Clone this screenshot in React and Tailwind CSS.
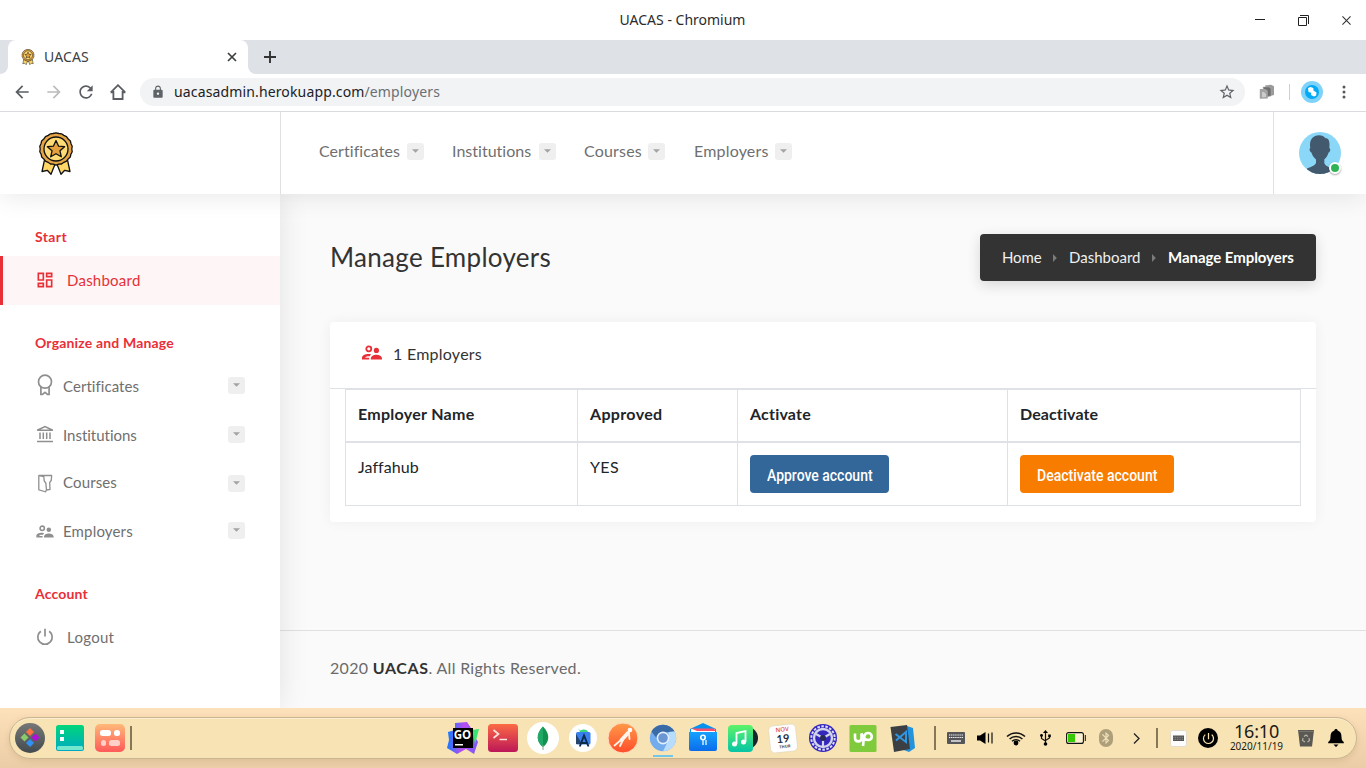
import React from "react";
import { MdOutlineDashboard, MdLock, MdStarBorder, MdRefresh, MdArrowBack, MdArrowForward, MdPowerSettingsNew, MdBluetooth } from "react-icons/md";

const NOTO = "font-['Noto_Sans',sans-serif]";

function Medal({ className }) {
  return (
    <svg viewBox="0 0 34 43" className={className}>
      <g stroke="#111" strokeWidth="1.3" strokeLinejoin="round">
        <path d="M5.500 28 3 39.500 8.300 38.300 12 42.200 16.500 31zM28.500 28 31 39.500 25.700 38.300 22 42.200 17.500 31z" fill="#ffd766" />
        <path d="M17 .8 20 1.500 22.500 1.800 24.800 3.400 27.500 4.700 29.200 7 31.400 9 32 11.700 33.200 14.300 32.800 17 33.200 19.700 31.900 22.200 31.300 25 29.200 26.900 27.500 29.200 24.900 30.300 22.500 32 19.800 32.200 17 33.200 14.200 32.200 11.500 32 9.100 30.300 6.500 29.200 4.800 26.900 2.700 25 2.100 22.200.8 19.700 1.200 17 .8 14.300 2 11.700 2.600 9 4.800 7 6.500 4.700 9.200 3.400 11.500 1.800 14 1.500z" fill="#e5a544" />
        <circle cx="17" cy="17" r="12" fill="#ffdb75" />
        <path d="m17 8.500 2.500 5.600 6.100.6-4.600 4.100 1.300 6-5.300-3.100-5.300 3.100 1.300-6-4.600-4.100 6.100-.6z" fill="#e5a03e" />
      </g>
    </svg>
  );
}

function Chip() {
  return (
    <span className="flex h-[17px] w-[17px] shrink-0 items-center justify-center rounded-[3px] bg-[#efefef]">
      <svg viewBox="0 0 7 4" className="-mt-px h-[4px] w-[7px]"><path d="M0 .3h7L3.500 3.800z" fill="#a3a3a3" /></svg>
    </span>
  );
}

function People({ className }) {
  return (
    <svg viewBox="0 0 20 15" className={className} fill="currentColor">
      <circle cx="6.800" cy="3.800" r="2.500" fill="none" stroke="currentColor" strokeWidth="1.800" />
      <circle cx="14.400" cy="5.400" r="2.600" />
      <path d="M8.800 14.500v-.8c0-2.600 3-3.900 5.500-3.900s5.700 1.300 5.700 3.900v.8z" />
      <path d="M0 14.500v-1.700c0-2.600 3.800-4 7.500-3.700.6 0 1.100.2 1.500.3L7.400 11.400c-2.300-.2-3.700.5-4.200 1.300h4v1.800z" />
    </svg>
  );
}
function AwardIcon() {
  return (
    <svg viewBox="0 0 16 22" className="-mt-[3px] h-[22px] w-[16px]" fill="none" stroke="#8f8f8f" strokeWidth="1.700">
      <circle cx="8" cy="7.700" r="6.500" />
      <path d="M3.900 12.500V20.300H5.500L8 18.300l2.500 2H12.100V12.500" />
    </svg>
  );
}
function BankIcon() {
  return (
    <svg viewBox="0 0 18 18" className="-mt-[3px] h-[18px] w-[18px]" fill="none" stroke="#8f8f8f" strokeWidth="1.500">
      <path d="M1.200 5.300 9 1.600l7.800 3.700zM4 7.500V14M7.300 7.500V14M10.700 7.500V14M14 7.500V14M1 16.500h16" />
    </svg>
  );
}
function CourseIcon() {
  return (
    <svg viewBox="0 0 16 19" className="h-[19px] w-[16px]" fill="none" stroke="#8f8f8f" strokeWidth="1.300">
      <path d="M1.500 1.500h13.500M1.800 1.500V15.800L8.500 17.800 9.500 16 8.800 9 7.200 7 6.800 2.500 1.800 1.500M14.700 1.500 14.200 6.500 12.700 8.500 13 15.500 9.500 16" />
    </svg>
  );
}
function PowerIcon() {
  return (
    <svg viewBox="0 0 18 18" className="-mt-[2px] h-[18px] w-[18px]" fill="none" stroke="#8f8f8f" strokeWidth="1.700">
      <path d="M4.800 3.200a7.200 7.200 0 1 0 8.400 0M9 .8V8.500" />
    </svg>
  );
}

function SideItem({ icon, label, h, gap = "gap-[9px]", chip = true, track, chipPos = "" }) {
  return (
    <div className={"flex items-center pl-[36px] pr-[35px] text-[15px] text-[#6f6f6f] " + h + " " + gap}>
      <span className="flex w-[18px] shrink-0 justify-center">{icon}</span>
      <span className={"flex-1 whitespace-nowrap " + track}>{label}</span>
      {chip && <span className={chipPos}><Chip /></span>}
    </div>
  );
}

function Sidebar() {
  return (
    <aside className="flex w-[280px] shrink-0 flex-col bg-white shadow-[0_0_28px_rgba(0,0,0,0.1)]">
      <div className="h-[62px] pl-[35px] pt-[33px] text-[14px] leading-[20px] font-bold tracking-[0.38px] text-[#e92f37]">Start</div>
      <div className="flex h-[49px] items-center gap-[13px] border-l-[3px] border-[#e92f37] bg-[#fef6f6] pl-[32px] text-[15px] tracking-[0.23px] text-[#e92f37]">
        <MdOutlineDashboard className="h-[20px] w-[20px] -mt-[2px] -mr-[1px]" />
        Dashboard
      </div>
      <div className="h-[57px] pl-[35px] pt-[28px] text-[14px] leading-[20px] font-bold tracking-[0.17px] whitespace-nowrap text-[#e92f37]">Organize and Manage</div>
      <SideItem icon={<AwardIcon />} label="Certificates" h="h-[49px]" track="tracking-[0.05px]" chipPos="-mt-[2px]" />
      <SideItem icon={<BankIcon />} label="Institutions" h="h-[49px]" track="tracking-[-0.02px]" chipPos="-mt-[2px]" />
      <SideItem icon={<CourseIcon />} label="Courses" h="h-[47px]" track="-mt-[2px] tracking-[0.13px]" />
      <SideItem icon={<People className="h-[13px] w-[18px] shrink-0 text-[#8f8f8f]" />} label="Employers" h="h-[48px]" track="tracking-[0.16px]" chipPos="-mt-[2px]" />
      <div className="h-[58px] pl-[35px] pt-[29px] text-[14px] leading-[20px] font-bold tracking-[0.18px] text-[#e92f37]">Account</div>
      <SideItem icon={<PowerIcon />} label="Logout" h="h-[49px]" gap="gap-[13px]" track="tracking-[0.28px]" chip={false} />
    </aside>
  );
}

function NavItem({ label, className, track }) {
  return (
    <div className={"flex items-center gap-[7px] text-[16px] text-[#6f6f6f] " + className}>
      <span className={"-mt-[2px] whitespace-nowrap " + track}>{label}</span>
      <Chip />
    </div>
  );
}

function Avatar() {
  return (
    <div className="relative h-[42px] w-[42px]">
      <svg viewBox="0 0 42 42" className="h-[42px] w-[42px]">
        <defs><clipPath id="av"><circle cx="21" cy="21" r="21" /></clipPath></defs>
        <g clipPath="url(#av)">
          <rect width="42" height="42" fill="#8ad7f7" />
          <path d="M11.300 16C10 9 13 3.500 20 3.300c3 0 5 1 6.500 3C30 6 31 10 30.300 16c1.400.2 1.200 4-.7 4.500-.8 3-2.300 5-4.300 7v3.500c1 3 4.500 4 7.700 5.500l2 6H6l2-6c3.200-1.500 7.500-2.500 9-5.500v-3.500c-2-2-3.800-4-4.600-7-2-.5-2.300-4.300-1.100-4.500z" fill="#43596e" />
        </g>
      </svg>
      <span className="absolute left-[30px] top-[30px] h-[12px] w-[12px] rounded-full border-2 border-white bg-[#2fb355] shadow-[0_1px_2px_rgba(0,0,0,0.35)]" />
    </div>
  );
}

function Browser() {
  return (
    <>
      <div className={"flex h-[40px] shrink-0 items-center bg-white pl-[109px] pr-[15px] " + NOTO}>
        <div className="-mt-[2px] flex-1 pl-[1px] text-center text-[14px] text-[#2b2b2b]">UACAS - Chromium</div>
        <div className="flex w-[96px] items-center justify-between">
          <svg viewBox="0 0 10 10" className="h-[10px] w-[10px]"><path d="M0 4h10v1H0z" fill="#222" /></svg>
          <svg viewBox="0 0 11 11" className="-ml-px h-[11px] w-[11px]" fill="none" stroke="#222"><path d="M.5 2.500h8v8h-8zM2 .5h8.500V9" /></svg>
          <svg viewBox="0 0 10 10" className="h-[9px] w-[9px]" fill="none" stroke="#333" strokeWidth="1.200"><path d="M.5.5l9 9M9.500.5l-9 9" /></svg>
        </div>
      </div>
      <div className="flex h-[34px] shrink-0 bg-[#dee1e6]">
        <div className="w-[8px] bg-white"><div className="h-full w-full rounded-br-[8px] bg-[#dee1e6]" /></div>
        <div className={"flex w-[240px] items-center rounded-t-[8px] bg-white pl-[13px] pr-[11px] text-[14px] text-[#3c4043] " + NOTO}>
          <Medal className="h-[16px] w-[14px]" />
          <span className="-mt-[2px] ml-[9px] flex-1 tracking-[0.1px]">UACAS</span>
          <svg viewBox="0 0 10 10" className="h-[10px] w-[10px]" fill="none" stroke="#3c4043" strokeWidth="1.700"><path d="M1 1l8 8M9 1 1 9" /></svg>
        </div>
        <div className="w-[8px] bg-white"><div className="h-full w-full rounded-bl-[8px] bg-[#dee1e6]" /></div>
        <div className="flex items-center pl-[8px]">
          <svg viewBox="0 0 12 12" className="h-[12px] w-[12px]" fill="none" stroke="#333" strokeWidth="1.900"><path d="M6 0v12M0 6h12" /></svg>
        </div>
      </div>
      <div className={"flex h-[38px] shrink-0 items-center border-b border-[#d9dbde] bg-white pb-px pl-[12px] " + NOTO}>
        <div className="flex w-[128px] items-center gap-[12px]">
          <MdArrowBack className="h-[20px] w-[20px] text-[#5a5d61]" />
          <MdArrowForward className="h-[20px] w-[20px] text-[#babcbe]" />
          <MdRefresh className="h-[20px] w-[20px] text-[#5a5d61]" />
          <svg viewBox="0 0 16 16" className="ml-[2px] h-[16px] w-[16px]" fill="none" stroke="#5a5d61" strokeWidth="1.800"><path d="M.8 8.300 8 1.200l7.200 7.100M3.400 7v8h9.200V7M.6 8.400h3M12.400 8.400h3" /></svg>
        </div>
        <div className="flex h-[28px] w-[1105px] items-center rounded-full bg-[#f1f3f4] pl-[11px] pr-[9px] text-[14px] text-[#202124]">
          <MdLock className="h-[14px] w-[14px] text-[#5f6368]" />
          <span className="-mt-px ml-[9px] flex-1 tracking-[0.14px]">uacasadmin.herokuapp.com<span className="text-[#6b6f74]">/employers</span></span>
          <MdStarBorder className="h-[18px] w-[18px] text-[#5f6368]" />
        </div>
        <svg viewBox="0 0 16 16" className="ml-[14px] h-[16px] w-[16px]">
          <path d="M6 1.500 12 .8l3 1.500V11L9 12.500z" fill="#9a9a9a" /><path d="M4 3h6l2 1.500V12l-6 1z" fill="#6f6f6f" stroke="#aaa" strokeWidth=".5" />
          <path d="M.8 5h5.500l2.500 1.800V14.500l-8 .3z" fill="#a3a3a3" /><path d="M3 8h2l2 2v3l-4 .3z" fill="#ccc" />
        </svg>
        <span className="ml-[14px] h-[16px] w-px bg-[#cdcfd2]" />
        <svg viewBox="0 0 22 22" className="ml-[11px] h-[22px] w-[22px]">
          <circle cx="11" cy="11" r="11" fill="#7fd3fb" /><circle cx="11" cy="11" r="7" fill="#03a9f4" />
          <path d="M7 7 9.500 6l2.800 1 .2 2.500 3 2-.3 3-2.200 1-3-1.500.3-2.200L7.500 11z" fill="#fff" />
        </svg>
        <svg viewBox="0 0 4 14" className="ml-[19px] h-[14px] w-[4px]" fill="#55585c"><circle cx="2" cy="2" r="1.500" /><circle cx="2" cy="7" r="1.500" /><circle cx="2" cy="12" r="1.500" /></svg>
      </div>
    </>
  );
}

function BreadArrow() {
  return <svg viewBox="0 0 4 8" className="mt-px h-[8px] w-[4px]"><path d="M0 0l3.800 4L0 8z" fill="#7b7b7b" /></svg>;
}

function Main() {
  return (
    <main className="flex flex-1 flex-col bg-[#fafafa]">
      <div className="flex h-[128px] items-start justify-between pl-[50px] pr-[50px] pt-[40px]">
        <h1 className="pt-[7px] text-[26px] leading-[32px] tracking-[0.3px] text-[#333]">Manage Employers</h1>
        <div className="flex h-[47px] w-[336px] items-center rounded-[4px] bg-[#333] pb-px pl-[22px] text-[15px] whitespace-nowrap text-[#f0f0f0] shadow-[0_4px_14px_rgba(0,0,0,0.14)]">
          <span className="w-[51px] tracking-[-0.1px]">Home</span><BreadArrow />
          <span className="ml-[12px] w-[83px]">Dashboard</span><BreadArrow />
          <span className="ml-[12px] font-bold tracking-[-0.05px] text-white">Manage Employers</span>
        </div>
      </div>
      <section className="mx-[50px] h-[200px] rounded-[4px] bg-white text-[16px] text-[#212529] shadow-[0_0_14px_rgba(0,0,0,0.05)]">
        <div className="flex h-[67px] items-center border-b border-[#dee2e6] pl-[32px]">
          <People className="-mt-[5px] h-[15px] w-[20px] text-[#e92f37]" />
          <span className="-mt-[2px] ml-[11px] tracking-[0.25px] text-[#333]">1 Employers</span>
        </div>
        <div className="mx-[15px] border-l border-t border-[#dee2e6]">
          <div className="grid h-[53px] grid-cols-[232px_160px_270px_293px] border-b-2 border-[#dee2e6] font-bold">
            {[["Employer Name", "tracking-[0.28px]"], ["Approved", "tracking-[0.34px]"], ["Activate", "tracking-[0.2px]"], ["Deactivate", "tracking-[0.1px]"]].map(([t, c]) => (
              <div key={t} className={"flex items-center border-r border-[#dee2e6] pb-[3px] pl-[12px] " + c}>{t}</div>
            ))}
          </div>
          <div className="grid h-[63px] grid-cols-[232px_160px_270px_293px] border-b border-[#dee2e6]">
            <div className="border-r border-[#dee2e6] pl-[12px] pt-[12px] tracking-[0.06px]">Jaffahub</div>
            <div className="border-r border-[#dee2e6] pl-[12px] pt-[12px] tracking-[0.36px]">YES</div>
            <div className="border-r border-[#dee2e6] pl-[12px] pt-[12px]">
              <button className="flex h-[38px] w-[139px] items-center rounded-[4px] bg-[#336699] pt-[3px] pl-[17px] text-white"><span className="origin-left scale-x-[0.874] font-['Roboto',sans-serif] font-medium whitespace-nowrap">Approve account</span></button>
            </div>
            <div className="border-r border-[#dee2e6] pl-[12px] pt-[12px]">
              <button className="flex h-[38px] w-[154px] items-center rounded-[4px] bg-[#f77c00] pt-[3px] pl-[17px] text-white"><span className="origin-left scale-x-[0.877] font-['Roboto',sans-serif] font-medium whitespace-nowrap">Deactivate account</span></button>
            </div>
          </div>
        </div>
      </section>
      <footer className="mt-[108px] flex flex-1 items-center whitespace-pre border-t border-[#dee0e2] pl-[50px] text-[16px] tracking-[0.3px] text-[#6a6a6a]">
        <span className="-mt-[3px]">2020 <b className="tracking-[0.6px] text-[#333]">UACAS</b>. All Rights Reserved.</span>
      </footer>
    </main>
  );
}

function Icon({ children, s = "h-[32px] w-[32px]", slot = "w-[40px]", vb = "0 0 32 32" }) {
  return <span className={"flex shrink-0 items-center justify-center " + slot}><svg viewBox={vb} className={s}>{children}</svg></span>;
}
const Sep = ({ className = "h-[24px]" }) => <span className={"w-[2px] shrink-0 bg-[#857859] " + className} />;

function Taskbar() {
  return (
    <footer className="flex h-[60px] shrink-0 items-start bg-linear-to-b from-[#fde1ba] to-[#ebcda7] px-[9px] pt-[9px]">
      <div className={"flex h-[42px] w-full items-center rounded-[21px] border border-[#cbb694] bg-[#f7e3b4] shadow-[0_2px_6px_rgba(120,80,30,0.15),inset_0_1px_0_#fbedcd] " + NOTO}>
        <Icon>
          <defs><linearGradient id="g1" x2="0" y2="1"><stop stopColor="#777" /><stop offset="1" stopColor="#434b4e" /></linearGradient></defs>
          <circle cx="16" cy="16" r="15" fill="url(#g1)" />
          <path d="m16 6 4 4-4 4-4-4z" fill="#ff7043" /><path d="m10.500 11.500 4 4-4 4-4-4z" fill="#8bc96a" /><path d="m21.500 11.500 4 4-4 4-4-4z" fill="#b010d8" /><path d="m16 17 4 4-4 4-4-4z" fill="#3191f5" />
        </Icon>
        <Icon>
          <defs><linearGradient id="g2" x2="0" y2="1"><stop stopColor="#00d67a" /><stop offset="1" stopColor="#00a9c4" /></linearGradient></defs>
          <rect x="2" y="3" width="28" height="26" rx="2.500" fill="url(#g2)" /><rect x="3" y="24" width="26" height="4" rx="1.500" fill="#74e8cf" />
          <path d="M6 8h4v4H6zM6 15h4v4H6z" fill="#fff" />
        </Icon>
        <Icon>
          <defs><linearGradient id="g3" x2="0" y2="1"><stop stopColor="#ffb978" /><stop offset="1" stopColor="#ff5a5a" /></linearGradient></defs>
          <rect x="1" y="2" width="30" height="28" rx="5" fill="url(#g3)" />
          <rect x="6" y="8" width="11" height="6" rx="2.500" fill="#fff" /><rect x="20" y="8" width="6" height="6" rx="2.500" fill="#fff" /><rect x="7" y="18" width="5" height="6" rx="2.500" fill="#ffd0c8" /><rect x="15" y="18" width="11" height="6" rx="2.500" fill="#ffd0c8" />
        </Icon>
        <Sep />
        <span className="w-[311px] shrink-0" />
        <Icon>
          <defs><linearGradient id="g4" x1="0" y1=".5" x2="1" y2=".6"><stop stopColor="#0f7dff" /><stop offset=".5" stopColor="#b84df0" /><stop offset="1" stopColor="#7a5cf5" /></linearGradient></defs>
          <path d="M8 1 20 0l4 6 4 9 3 5-4 12-8-5-9 5L0 26l2-8-1-8 7-2z" fill="url(#g4)" /><path d="m25 8 7-1-4 15z" fill="#36e373" />
          <rect x="6" y="6" width="20" height="20" fill="#000" /><text x="6.800" y="16.500" fontSize="11.500" fontWeight="700" fill="#fff" fontFamily="Open Sans">GO</text><path d="M8 22h8v1.500H8z" fill="#fff" />
        </Icon>
        <Icon>
          <defs><linearGradient id="g5" x2="0" y2="1"><stop stopColor="#fb6a44" /><stop offset="1" stopColor="#bd1757" /></linearGradient></defs>
          <rect x="1" y="2" width="30" height="28" rx="3.500" fill="url(#g5)" /><path d="m6.500 8 5 4-5 4M12.500 17.500H20" fill="none" stroke="#ffe3df" strokeWidth="1.700" />
        </Icon>
        <Icon><circle cx="16" cy="16" r="16" fill="#fff" /><path d="M16 4.500c8 8 6 16 0 20.500-6-4.500-8-12.500 0-20.500z" fill="#12924f" /><path d="M16 4.500c-8 8-6 16 0 20.500z" fill="#1fa866" /><path d="M16 23v5" stroke="#86a888" /></Icon>
        <Icon>
          <circle cx="16" cy="16" r="14" fill="#fff" /><path d="M12 11a5 5 0 0 1 9.500 0z" fill="#36d67e" /><path d="M12 7.500 13.500 9" stroke="#36d67e" /><rect x="9" y="10" width="14.500" height="12.500" rx="1.500" fill="#3a80ee" /><path d="M9 12 15 22H9z" fill="#27446b" />
          <path d="m12.800 24.500 4.200-11 4.500 11M14 21h6" fill="none" stroke="#0b2b4a" strokeWidth="1.900" />
        </Icon>
        <Icon>
          <defs><linearGradient id="g6" x2="0" y2="1"><stop stopColor="#ff9a48" /><stop offset="1" stopColor="#ff4d2b" /></linearGradient></defs>
          <circle cx="16" cy="16" r="15" fill="url(#g6)" stroke="#ffdcc0" />
          <path d="M21 11 14.500 18" stroke="#fff3ea" strokeWidth="4" strokeLinecap="round" /><path d="M14 18 7.500 23.500M16 18l-3 6M22 12l.5 5" fill="none" stroke="#fff3ea" strokeWidth="1.800" strokeLinecap="round" /><circle cx="23" cy="8" r="2.300" fill="#fff" />
        </Icon>
        <span className="relative flex w-[40px] shrink-0 justify-center">
          <svg viewBox="0 0 28 28" className="h-[28px] w-[28px]">
            <circle cx="14" cy="14" r="13.200" fill="#73acec" /><path d="M2.500 7.500A13.200 13.200 0 0 1 25.500 7.500L14 8.500 7.500 14z" fill="#3a6ba7" /><path d="M25.500 7.500A13.200 13.200 0 0 1 14 27.200L19.500 16V8z" fill="#b8dcfb" />
            <circle cx="14" cy="14" r="6.400" fill="#e2effc" /><circle cx="14" cy="14" r="4.800" fill="#6b96d3" />
          </svg>
          <span className="absolute top-[31px] h-[2px] w-[20px] bg-[#72c6e8]" />
        </span>
        <Icon>
          <defs><linearGradient id="g7" x2="0" y2="1"><stop stopColor="#16a2ff" /><stop offset="1" stopColor="#0b6bea" /></linearGradient></defs>
          <path d="M3 7 16 1l13 6v5H3z" fill="#0792ee" /><path d="M4 7h24v5H4z" fill="#fff" /><path d="M4 6.500h23L29 9H10z" fill="#ff4f6d" /><path d="M2 10h28v17a2 2 0 0 1-2 2H4a2 2 0 0 1-2-2z" fill="url(#g7)" />
          <circle cx="16" cy="15.500" r="2.200" fill="none" stroke="#fff" strokeWidth="1.600" /><path d="M16 18v5M19 18v5" stroke="#cfe8ff" strokeWidth="1.500" />
        </Icon>
        <Icon>
          <defs><linearGradient id="g8" x2="0" y2="1"><stop stopColor="#5df268" /><stop offset="1" stopColor="#06c5a6" /></linearGradient></defs>
          <circle cx="20" cy="16" r="11" fill="#16242c" /><rect x="1" y="3" width="25" height="27" rx="4" fill="url(#g8)" />
          <path d="M9.500 22V11l9-2v11" fill="none" stroke="#fff" strokeWidth="1.800" /><circle cx="7.500" cy="22" r="2.500" fill="#fff" /><circle cx="16.500" cy="20" r="2.500" fill="#fff" />
        </Icon>
        <Icon>
          <g transform="rotate(-6 16 16)"><rect x="2.500" y="3" width="27" height="27" rx="4.500" fill="#fff" stroke="#d9d0bd" strokeWidth=".5" />
            <text x="16" y="9.500" fontSize="6" fill="#df4a55" textAnchor="middle" fontFamily="Open Sans" fontWeight="600">NOV</text><text x="16" y="20.500" fontSize="11" fontWeight="700" fill="#253042" textAnchor="middle" fontFamily="Lato">19</text><text x="17" y="26" fontSize="4" fontWeight="700" fill="#444" textAnchor="middle" fontFamily="Open Sans">THUR</text></g>
        </Icon>
        <Icon>
          <circle cx="16" cy="16" r="14" fill="#3427be" /><circle cx="16" cy="16" r="11.700" fill="none" stroke="#dcdcf5" strokeWidth="2" strokeDasharray="2.600 1.480" /><circle cx="16" cy="16" r="9" fill="none" stroke="#d3d5e8" strokeWidth="2.400" />
          <path d="M16 16V24M16 16 9 12M16 16l7-4" stroke="#d3d5e8" strokeWidth="2.200" /><circle cx="16" cy="16" r="3" fill="#292b55" />
        </Icon>
        <Icon>
          <rect x="2.500" y="3" width="27" height="27" rx="1.500" fill="#7fcb3d" /><path d="M8 11.500v4.500c0 4.500 6.500 4.500 6.500 0v-4.500c1.500 4 3.500 6.500 6.500 6.500 5 0 5-7 0-7-4 0-4 4-5 13" fill="none" stroke="#fff" strokeWidth="2.600" />
        </Icon>
        <span className="w-px" />
        <Icon>
          <path d="m19 4 6 2 2 20-6 4-8-3z" fill="#2393dd" /><path d="M2.500 5 19 3l3 24L6 30z" fill="#3b3f43" />
          <path d="m7.500 12 10.500 8V10L8 18.500" fill="none" stroke="#2f96df" strokeWidth="2" />
        </Icon>
        <span className="w-[10px] shrink-0" />
        <Sep />
        <Icon slot="ml-[11px] w-[18px]" s="h-[12px] w-[18px]" vb="0 0 18 12"><rect width="18" height="12" rx="1" fill="#56565a" /><path d="M2 3h14M2 5.500h14" stroke="#fff" strokeWidth="1.200" strokeDasharray="1.300 .8" /><path d="M4 9h10" stroke="#fff" strokeWidth="1.300" /></Icon>
        <Icon slot="ml-[11px] w-[18px]" s="h-[14px] w-[16px]" vb="0 0 16 14"><path d="M0 4.500h3L8.500 1v12L3 9.500H0z" /><path d="M11.500 2.500v9M15 1.500v11" stroke="#111" strokeWidth="1.200" /></Icon>
        <Icon slot="ml-[12px] w-[20px]" s="h-[16px] w-[20px]" vb="0 0 20 16"><path d="M1 6.500a13 13 0 0 1 18 0M3.600 9a9.300 9.300 0 0 1 12.800 0M6 11.300a6 6 0 0 1 8 0" fill="none" stroke="#111" strokeWidth="1.500" /><circle cx="10" cy="13" r="2.400" /></Icon>
        <Icon slot="ml-[13px] w-[12px]" s="h-[16px] w-[11px]" vb="0 0 11 16"><path d="M5.500 2v12M1.500 5v3.500l4 2.500M9.500 6v2l-4 2.500" fill="none" stroke="#111" strokeWidth="1.200" /><path d="M5.500 0 8 3H3z" /><circle cx="5.500" cy="14" r="1.800" /><circle cx="1.500" cy="5.500" r="1.400" /><path d="M8.200 4.500h2.600v2.600H8.200z" /></Icon>
        <Icon slot="ml-[15px] w-[20px]" s="h-[12px] w-[20px]" vb="0 0 20 12"><rect x=".6" y=".6" width="16.800" height="10.800" rx="2" fill="#fbf1d2" stroke="#111" strokeWidth="1.100" /><path d="M2 2h7v8H2z" fill="#36c904" /><path d="M19.300 3v6" stroke="#111" /></Icon>
        <span className="ml-[13px] flex h-[18px] w-[14px] shrink-0 items-center justify-center rounded-full bg-[#ae9f7b]"><MdBluetooth className="h-[14px] w-[14px] shrink-0 text-[#efdfb7]" /></span>
        <Icon slot="ml-[20px] w-[7px]" s="h-[11px] w-[7px]" vb="0 0 7 11"><path d="m1 .5 5 5-5 5" fill="none" stroke="#222" strokeWidth="1.300" /></Icon>
        <span className="w-[16px] shrink-0" />
        <Sep className="h-[20px]" />
        <Icon slot="ml-[12px] w-[17px]" s="h-[17px] w-[17px]" vb="0 0 17 17"><rect x=".5" y=".5" width="16" height="16" rx="2" fill="#fcfcfc" stroke="#e4dcc8" /><path d="M3 5.500h11v5.500H3z" fill="#555" /><path d="M3.500 7.300h10M3.500 9.300h10" stroke="#bbb" strokeWidth=".6" strokeDasharray="1 .7" /></Icon>
        <span className="ml-[11px] flex h-[20px] w-[20px] shrink-0 items-center justify-center rounded-full bg-black"><MdPowerSettingsNew className="h-[15px] w-[15px] text-[#f7e3b4]" /></span>
        <span className="ml-[10px] flex w-[57px] shrink-0 flex-col items-center text-[#1c1a15]">
          <span className="-mt-[2px] text-[18px] leading-[18px] tracking-[-0.2px]">16:10</span>
          <span className="mt-px text-[10px] leading-[11px] whitespace-nowrap">2020/11/19</span>
        </span>
        <Icon slot="ml-[13px] w-[16px]" s="h-[17px] w-[16px]" vb="0 0 16 17"><path d="M0 0h16l-2 16.500H2z" fill="#5a5852" /><path d="M.5 1.500h15" stroke="#77746a" /><path d="m6 6.500 2-1.500 2 1.500M11 8l.5 2.500L9.500 12M5 8l-.5 2.500L7 12" fill="none" stroke="#b5b2a8" strokeWidth="1.200" /></Icon>
        <Icon slot="ml-[13px] w-[17px]" s="h-[18px] w-[16px]" vb="0 0 16 18"><path d="M8 0c1 0 1.500.6 1.600 1.400C12.500 2.200 13.500 4.500 13.500 8c0 3 1 4 2.300 5v1.200H.2V13C1.500 12 2.500 11 2.500 8c0-3.500 1-5.800 3.900-6.600C6.500.6 7 0 8 0zM5.500 15.500h5L8 18z" /></Icon>
      </div>
    </footer>
  );
}

export default function App() {
  return (
    <div className="flex h-[768px] w-[1366px] flex-col overflow-hidden bg-white font-['Lato',sans-serif]">
      <Browser />
      <div className="flex h-[596px] shrink-0 flex-col overflow-hidden">
        <header className="relative z-10 flex h-[82px] shrink-0 bg-white shadow-[0_0_28px_rgba(0,0,0,0.11)]">
          <div className="w-[281px] border-r border-[#dee0e2] pl-[39px] pt-[20px]"><Medal className="h-[43px] w-[34px]" /></div>
          <nav className="flex flex-1 items-center pb-[3px] pl-[38px]">
            <NavItem label="Certificates" className="w-[133px]" track="w-[81px] tracking-[0.05px]" />
            <NavItem label="Institutions" className="w-[132px]" track="w-[80px] tracking-[0.02px]" />
            <NavItem label="Courses" className="w-[110px]" track="w-[57px] tracking-[0.2px]" />
            <NavItem label="Employers" className="w-[100px]" track="w-[74px] tracking-[0.18px]" />
          </nav>
          <div className="w-[93px] border-l border-[#dee0e2] pl-[25px] pt-[20px]"><Avatar /></div>
        </header>
        <div className="flex flex-1"><div className="relative flex"><Sidebar /></div><Main /></div>
      </div>
      <Taskbar />
    </div>
  );
}
